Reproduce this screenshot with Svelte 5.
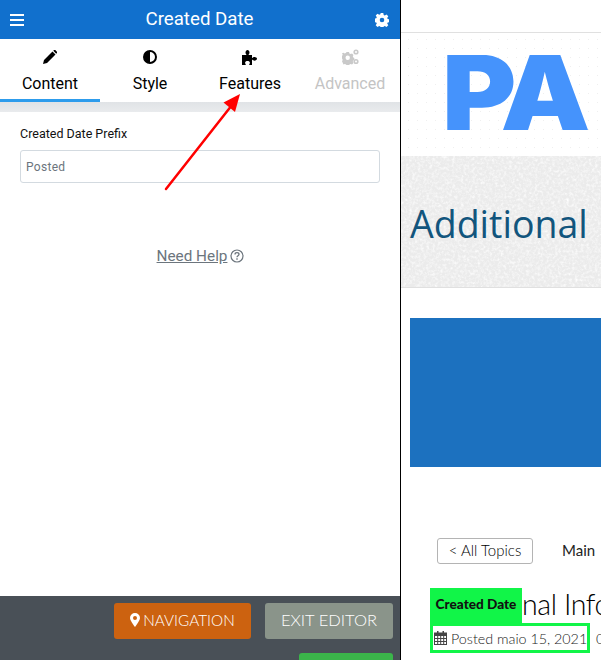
<script>
  const tabs = [
    { label: 'Content', icon: 'pencil', active: true },
    { label: 'Style', icon: 'contrast' },
    { label: 'Features', icon: 'puzzle' },
    { label: 'Advanced', icon: 'cogs', disabled: true }
  ];
</script>

<div class="page">
  <section class="panel">
    <header class="head">
      <svg class="burger" viewBox="0 0 14 12" width="14" height="12"><path d="M0 0h14v2H0zM0 5h14v2H0zM0 10h14v2H0z" fill="#fff"/></svg>
      <h1>Created Date</h1>
      <svg class="gear" viewBox="0 0 14 14" width="14" height="14">
        <path fill="#fff" fill-rule="evenodd" d="M5.700 0h2.600l.4 2 1.100.5 1.700-1.100 1.800 1.800-1.100 1.700.5 1.100 2 .4v2.600l-2 .4-.5 1.100 1.100 1.700-1.800 1.800-1.700-1.100-1.100.5-.4 2H5.700l-.4-2-1.100-.5-1.700 1.100-1.800-1.800 1.100-1.700-.5-1.100-2-.4V5.700l2-.4.5-1.100-1.100-1.700 1.800-1.800 1.700 1.100 1.100-.5zM7 4.700a2.300 2.300 0 1 0 0 4.600 2.300 2.300 0 0 0 0-4.600z"/>
      </svg>
    </header>

    <nav class="tabs">
      {#each tabs as t}
        <div class="tab" class:active={t.active} class:disabled={t.disabled}>
          <span class="ico">
            {#if t.icon === 'pencil'}
              <svg viewBox="0 0 14 14" width="14" height="14"><path d="M0 14l1-4L9.500 1.500l3 3L4 13zM10.300.8l.7-.7a1 1 0 0 1 1.300 0l1.600 1.600a1 1 0 0 1 0 1.300l-.7.7z" fill="#000"/></svg>
            {:else if t.icon === 'contrast'}
              <svg viewBox="0 0 14 14" width="14" height="14"><path fill="#000" fill-rule="evenodd" d="M7 0a7 7 0 1 1 0 14A7 7 0 0 1 7 0zm0 2v10a5 5 0 0 0 0-10z"/></svg>
            {:else if t.icon === 'puzzle'}
              <svg viewBox="0 0 16 15" width="16" height="15"><path fill="#000" d="M0 5h4.500C4 4 3.500 3.500 3.500 2.500 3.500 1 4.500 0 5.500 0s2 1 2 2.500c0 1-.5 1.500-1 2.500H10v3c1-.5 1.500-1 2.500-1 1.200 0 2.500.8 2.500 1.800s-1.300 1.900-2.500 1.900c-1 0-1.500-.6-2.500-1.100V15H7c.4-1 .9-1.400.9-2.300C7.900 11.600 6.800 11 5.500 11s-2.400.6-2.400 1.700c0 .9.500 1.300.9 2.300H0z"/></svg>
            {:else}
              <svg viewBox="0 0 17 16" width="17" height="16"><g fill="#c9c9c9"><path fill-rule="evenodd" d="M4.500 3h2.500l.4 1.500 1.300.6 1.300-.7 1.500 1.600-.7 1.200.5 1.300 1 .4v2.200l-1 .4-.5 1.300.7 1.200-1.500 1.600-1.300-.7-1.300.5-.4 1.200H4.500l-.4-1.200-1.300-.5-1.300.7L0 12.300l.7-1.200-.5-1.300L0 9.500V7.300l.2-.5.5-1.300-.7-1.200 1.500-.6 1.300.7 1.300-.6zM5.700 6.500a2.200 2.200 0 1 0 0 4.400 2.200 2.200 0 0 0 0-4.400z"/><circle cx="14" cy="3" r="2.600"/><circle cx="14" cy="12.500" r="2.600"/></g><circle cx="14" cy="3" r="1" fill="#fff"/><circle cx="14" cy="12.500" r="1" fill="#fff"/></svg>
            {/if}
          </span>
          <span class="lbl">{t.label}</span>
        </div>
      {/each}
    </nav>
    <div class="strip"></div>

    <div class="body">
      <label class="field-label" for="prefix">Created Date Prefix</label>
      <input id="prefix" class="field" placeholder="Posted" />
      <a class="help" href="#help">Need Help <svg viewBox="0 0 14 14" width="14" height="14"><circle cx="7" cy="7" r="6" fill="none" stroke="#6c757d" stroke-width="1.200"/><path d="M5 5.400C5 4.200 5.900 3.600 7 3.600s2 .7 2 1.700c0 1.500-2 1.400-2 3" fill="none" stroke="#6c757d" stroke-width="1.300"/><path d="M6.300 9.300h1.400v1.400H6.300z" fill="#6c757d"/></svg></a>
    </div>

    <footer class="foot">
      <div class="foot-row">
        <button class="btn nav">
          <svg viewBox="0 0 10 14" width="10" height="14"><path fill="#fff" fill-rule="evenodd" d="M5 0a5 5 0 0 1 5 5c0 2-3 6.500-5 9C3 11.500 0 7 0 5a5 5 0 0 1 5-5zm0 3a2 2 0 1 0 0 4 2 2 0 0 0 0-4z"/></svg>
          NAVIGATION
        </button>
        <button class="btn exit">EXIT EDITOR</button>
      </div>
      <div class="foot-row"><div class="save"></div></div>
    </footer>

    <svg class="arrow" viewBox="0 0 400 660" width="400" height="660">
      <path d="M166 189L232 105" stroke="#f00" stroke-width="2.500" fill="none" stroke-linecap="round"/>
      <path d="M240 94L235 112 223.500 102.500z" fill="#f00"/>
    </svg>
  </section>

  <div class="divider"></div>

  <main class="site">
    <div class="topbar"></div>
    <div class="logo"><span>PA</span></div>
    <div class="hero">
      <svg class="paper" width="200" height="131" aria-hidden="true">
        <filter id="grain"><feTurbulence type="fractalNoise" baseFrequency="0.35" numOctaves="4" seed="4"/><feColorMatrix values="0 0 0 0 1  0 0 0 0 1  0 0 0 0 1  1.200 1.200 0 0 -1.050"/></filter>
        <rect width="200" height="131" filter="url(#grain)"/>
      </svg>
      <h2>Additional</h2>
    </div>
    <div class="block"></div>
    <div class="crumbs">
      <button class="topics">&lt; All Topics</button>
      <span class="main-link">Main</span>
    </div>
    <div class="article">
      <div class="title">
        <span class="tag">Created Date</span>
        <span class="title-text">nal Info</span>
      </div>
      <div class="meta">
        <div class="date">
          <svg viewBox="0 0 13 14" width="13" height="14"><path fill="#444" fill-rule="evenodd" d="M3 0h1.500v1.500h4V0H10v1.500h3V14H0V1.500h3zM1 5v2h2.200V5zm3.200 0v2h2V5zm3 0v2h2V5zm3 0v2H12V5zM1 8v2h2.200V8zm3.200 0v2h2V8zm3 0v2h2V8zm3 0v2H12V8zM1 11v2h2.200v-2zm3.200 0v2h2v-2zm3 0v2h2v-2zm3 0v2H12v-2z"/></svg>
          <span>Posted maio 15, 2021</span>
        </div>
        <span class="more">0</span>
      </div>
    </div>
  </main>
</div>

<style>
  :global(body) { margin: 0; background: #fff; }
  .page { display: flex; width: 601px; height: 660px; overflow: hidden; font-family: Roboto, sans-serif; }
  .panel { position: relative; width: 400px; flex: none; height: 660px; display: flex; flex-direction: column; background: #fff; }
  .head { height: 39px; flex: none; background: #1170cd; display: flex; align-items: center; justify-content: space-between; padding: 0 11px 0 10px; }
  .head h1 { margin: 0; font-size: 18.700px; font-weight: 400; color: #fff; line-height: 39px; }
  .tabs { display: flex; height: 63px; flex: none; }
  .tab { width: 100px; box-sizing: border-box; display: flex; flex-direction: column; align-items: center; color: #000; border-bottom: 3px solid transparent; }
  .tab.active { border-bottom-color: #2d9cec; }
  .tab.disabled { color: #c4c4c4; }
  .ico { height: 18px; margin-top: 9px; display: flex; align-items: center; }
  .lbl { font-size: 16px; line-height: 20px; margin-top: 8px; }
  .strip { height: 10px; flex: none; background: linear-gradient(#e0e3e6, #e9ebed); }
  .body { flex: 1; padding: 14px 20px 0; display: flex; flex-direction: column; }
  .field-label { font-size: 12.500px; line-height: 16px; color: #111; }
  .field { margin-top: 8px; height: 33px; box-sizing: border-box; border: 1px solid #d3dae0; border-radius: 3px; padding: 0 5px; font-family: Roboto, sans-serif; font-size: 12px; letter-spacing: .3px; outline: none; background: #fff; }
  .field::placeholder { color: #6c757d; opacity: 1; }
  .help { margin-top: 64px; margin-left: 1px; align-self: center; color: #6c757d; font-size: 15.300px; line-height: 18px; text-decoration: underline; display: flex; align-items: center; gap: 3px; }
  .foot { height: 64px; flex: none; background: #495057; padding: 7px 7px 0 0; box-sizing: border-box; display: flex; flex-direction: column; gap: 14px; align-items: flex-end; }
  .foot-row { display: flex; gap: 14px; }
  .btn { height: 36px; border: 0; border-radius: 3px; color: #fff; font-family: Lato, sans-serif; font-weight: 300; display: flex; align-items: center; justify-content: center; gap: 3px; padding: 0 0 2px; }
  .nav { width: 137px; background: #cc6210; font-size: 15.300px; }
  .exit { width: 128px; background: #8a948a; font-size: 16.500px; }
  .save { width: 94px; height: 20px; background: #3bb54a; border-radius: 3px 3px 0 0; }
  .arrow { position: absolute; left: 0; top: 0; pointer-events: none; }
  .divider { width: 1px; flex: none; background: #000; }
  .site { flex: 1; min-width: 0; overflow: hidden; display: flex; flex-direction: column; background: #fff; }
  .topbar { height: 33px; flex: none; border-bottom: 1px solid #e0e0e0; box-sizing: border-box; }
  .logo { height: 123px; flex: none; padding-left: 41px; box-sizing: border-box; background-image: radial-gradient(#efefef .5px, transparent .8px); background-size: 9px 9px; background-position: 3px 2px; }
  .logo span { display: block; width: 150px; transform: scaleX(1.1); transform-origin: left; font-family: Inter, sans-serif; font-weight: 900; font-size: 103px; line-height: 120px; letter-spacing: -5px; color: #4593fc; white-space: nowrap; }
  .hero { position: relative; height: 132px; flex: none; box-sizing: border-box; background: #ebebeb; border-bottom: 1px solid #e0e0e0; overflow: hidden; padding: 46px 0 0 9px; }
  .paper { position: absolute; left: 0; top: 0; }
  .hero h2 { position: relative; margin: 0; font-family: "Open Sans", sans-serif; font-weight: 400; font-size: 37.500px; line-height: 44px; color: #12557d; white-space: nowrap; }
  .block { height: 149px; flex: none; margin: 30px 0 0 9px; background: #1c71bf; }
  .crumbs { display: flex; align-items: center; margin: 71px 0 0 36px; gap: 29px; }
  .topics { width: 96px; height: 26px; box-sizing: border-box; border: 1px solid #b4b4b4; border-radius: 3px; background: #fff; font-family: Lato, sans-serif; font-size: 15px; font-weight: 300; color: #000; padding: 0 0 2px; }
  .main-link { font-family: Lato, sans-serif; font-size: 15px; color: #222; margin-top: -2px; }
  .article { position: relative; margin: 24px 0 0 29px; }
  .title { height: 35px; display: flex; position: relative; }
  .title-text { margin-left: 92px; font-family: Lato, sans-serif; font-size: 28.500px; letter-spacing: -.4px; line-height: 32px; color: #000; white-space: nowrap; font-weight: 300; }
  .tag { width: 92px; height: 35px; position: absolute; left: 0; top: 0; z-index: 1; background: #11f548; font-family: Lato, sans-serif; font-weight: 900; font-size: 13.600px; line-height: 33px; text-align: center; color: #111; white-space: nowrap; }
  .meta { display: flex; align-items: center; white-space: nowrap; font-family: Lato, sans-serif; font-size: 14.300px; font-weight: 300; color: #222; }
  .date { width: 160px; height: 30px; box-sizing: border-box; border: 3px solid #11f548; display: flex; align-items: center; gap: 4px; padding-left: 1px; flex: none; }
  .date svg { flex: none; }
  .more { margin-left: 6px; }
</style>
